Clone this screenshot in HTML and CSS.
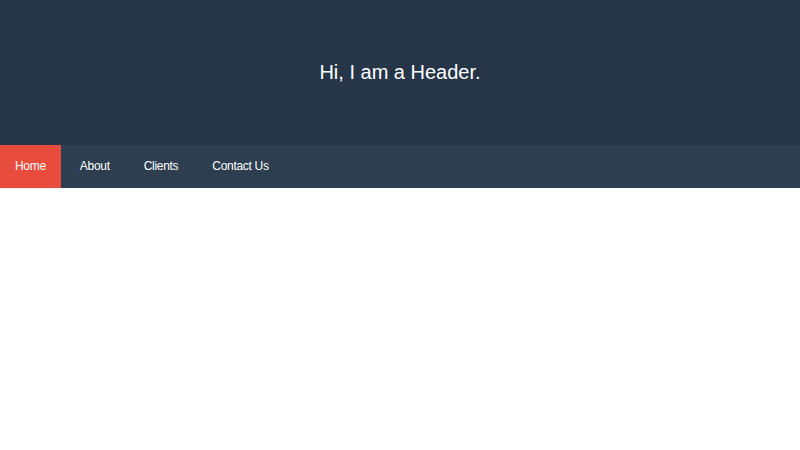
FILE: index.html
```html
<!DOCTYPE html>
<html>
<head>
<meta charset="utf-8">
<link rel="stylesheet" href="styles.css">
</head>
<body>
<header class="header">
  <h1 class="title">Hi, I am a Header.</h1>
</header>
<nav class="nav">
  <a class="nav-item active" href="#">Home</a>
  <a class="nav-item" href="#">About</a>
  <a class="nav-item" href="#">Clients</a>
  <a class="nav-item" href="#">Contact Us</a>
</nav>
</body>
</html>
```
FILE: styles.css
```css
html, body {
  margin: 0;
  padding: 0;
  background: #ffffff;
  font-family: "Liberation Sans", Arial, sans-serif;
}
.header {
  height: 145px;
  background: #263648;
  display: flex;
  align-items: center;
  justify-content: center;
}
.title {
  margin: 0;
  font-size: 20px;
  font-weight: normal;
  color: #ffffff;
}
.nav {
  height: 43px;
  background: #2c3e50;
  display: flex;
  gap: 4px;
}
.nav-item {
  display: block;
  padding: 0 15px;
  line-height: 43px;
  font-size: 12px;
  letter-spacing: -0.3px;
  color: #ffffff;
  text-decoration: none;
}
.nav-item.active {
  background: #e74c3c;
}
```
